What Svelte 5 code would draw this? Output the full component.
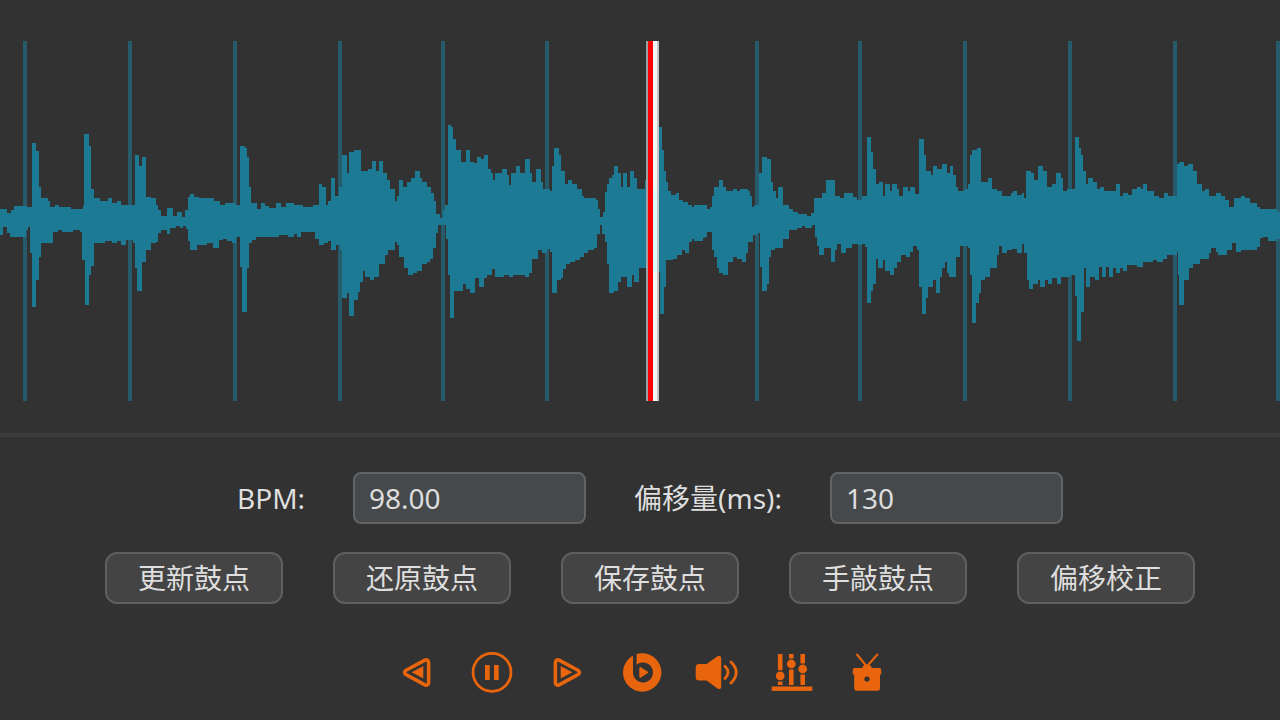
<script>
  let bpm = '98.00';
  let offset = '130';

  const beats = [25, 130, 235, 340, 443, 547, 757, 860, 965, 1070, 1175, 1278];
  const actions = ['更新鼓点', '还原鼓点', '保存鼓点', '手敲鼓点', '偏移校正'];

  // envelope steps as "x,y", the centre line is around y = 182
  const upper = `0,169 7,173 11,170 14,166 27,167 32,103 36,111 39,147 41,158 48,161 50,167 55,165 59,167 71,169
    83,166 84,94 89,106 91,149 94,158 100,161 108,158 112,163 117,161 121,165 135,115 139,126 142,117 146,157
    151,158 156,165 158,170 161,176 167,168 173,176 177,172 182,177 185,170 188,157 190,154 194,157 199,158
    214,161 220,165 225,163 235,165 240,106 245,108 247,117 249,147 251,163 257,169 261,163 265,166 269,168
    276,163 281,167 286,163 294,165 303,167 313,165 319,144 322,147 326,165 328,161 331,138 335,156 339,147
    342,115 347,133 349,112 354,110 361,131 368,129 372,121 376,131 379,121 383,133 387,140 390,149 395,161
    397,156 399,140 403,147 407,142 411,138 415,131 420,138 422,142 427,147 431,153 434,161 436,174 440,178
    443,170 445,165 448,85 451,87 453,99 456,110 461,122 466,110 470,122 474,123 477,117 481,119 484,115
    488,129 491,133 493,140 495,133 502,129 507,135 509,145 511,133 516,126 520,133 525,119 530,133 532,142
    536,129 541,142 543,149 550,151 552,126 554,108 559,115 561,131 565,144 568,140 572,144 577,149 582,156
    584,158 596,160 598,169 600,177 603,172 605,152 607,144 609,138 612,135 614,126 618,133 621,147 623,133
    627,147 630,131 634,138 637,149 645,140 658,87 662,110 664,131 666,142 668,151 671,155 676,153 679,160
    683,162 688,165 692,167 694,165 707,169 710,167 712,156 714,147 719,140 723,147 726,151 733,149 737,151
    740,149 748,151 750,156 752,167 754,165 759,133 762,117 767,119 771,142 773,151 776,158 778,147 783,165
    789,169 793,172 798,174 807,176 811,173 814,158 822,153 826,140 835,156 840,158 844,153 853,157 857,160
    862,156 867,97 871,112 873,129 876,144 879,142 883,156 885,144 890,151 892,144 897,149 899,156 903,147
    908,151 910,147 915,154 919,99 924,115 926,131 931,135 933,126 937,129 942,124 947,133 950,126 953,135
    956,147 958,151 965,149 968,144 970,115 972,110 977,108 981,142 988,138 992,149 997,151 1002,156 1011,153
    1013,151 1017,155 1022,153 1024,158 1026,131 1031,133 1034,140 1038,126 1043,131 1047,147 1052,144
    1056,133 1061,138 1063,151 1067,149 1075,97 1079,108 1081,115 1083,131 1086,144 1088,138 1093,142
    1097,149 1100,147 1104,151 1116,144 1120,156 1123,153 1128,155 1132,149 1137,147 1141,149 1143,144
    1147,151 1154,156 1159,158 1164,153 1168,156 1177,124 1179,122 1184,126 1188,124 1193,131 1197,144
    1202,151 1205,149 1209,156 1216,153 1221,156 1225,160 1229,167 1234,158 1241,156 1245,158 1250,163
    1257,167 1260,169 1277,172`;

  const lower = `0,195 3,187 7,193 10,197 26,190 28,187 30,213 32,267 36,240 39,217 41,203 53,192 58,190 62,192
    73,190 80,192 82,220 85,265 89,235 91,226 94,203 105,201 112,203 117,201 121,205 126,200 133,203 135,228
    137,251 142,222 146,210 151,203 156,202 158,193 161,190 167,194 170,188 176,186 180,188 183,186 186,189
    188,201 190,210 197,205 207,203 213,208 219,200 223,199 227,201 232,203 236,197 240,227 242,272 247,228
    249,203 252,200 256,197 279,195 288,197 294,194 297,197 301,192 315,199 319,205 324,203 328,201 331,210
    336,205 340,210 342,258 347,253 349,276 354,260 358,252 360,242 363,231 365,237 370,240 374,237 379,224
    385,215 388,210 395,202 397,205 399,217 404,228 408,235 413,233 417,231 422,224 427,222 430,219 433,208
    436,193 438,185 446,199 448,235 450,278 454,251 463,244 466,249 470,253 475,238 479,247 484,238 487,235
    492,229 495,237 504,235 509,237 513,235 525,237 529,233 532,219 538,210 542,213 547,209 550,212 552,253
    557,240 561,238 563,229 566,224 570,222 575,220 580,217 584,213 588,210 594,208 597,194 600,185 602,194
    605,202 607,224 609,253 614,251 618,242 621,237 627,247 632,235 634,242 639,228 646,232 660,274 664,247
    666,220 673,219 677,215 682,210 685,213 689,202 692,199 694,201 703,198 705,197 707,192 712,210 714,217
    717,228 719,233 723,235 728,222 733,217 737,219 742,222 746,213 748,202 753,195 757,193 760,227 762,251
    767,244 769,217 771,210 775,208 783,199 789,190 797,188 802,186 805,188 812,185 815,197 817,206 819,215
    824,208 831,222 835,210 837,204 841,213 846,208 852,204 858,205 862,204 865,207 867,263 871,251 873,244
    876,219 878,228 883,220 885,231 890,235 894,228 897,222 901,215 906,217 910,212 913,206 917,210 919,247
    922,274 926,258 928,247 933,240 936,253 940,237 942,228 945,222 947,233 949,237 956,217 960,206 968,208
    970,235 972,283 976,263 979,253 981,240 985,237 990,228 997,215 999,206 1002,213 1007,210 1012,209
    1017,213 1022,204 1024,213 1027,240 1029,249 1033,244 1038,240 1040,247 1045,240 1048,244 1052,238
    1057,244 1061,237 1070,235 1075,256 1077,301 1081,272 1084,228 1086,247 1090,237 1095,240 1099,227
    1102,237 1106,227 1109,237 1113,228 1116,233 1120,228 1123,231 1127,225 1137,227 1143,222 1153,220
    1157,222 1163,219 1167,215 1177,212 1178,235 1179,265 1184,240 1189,228 1193,224 1200,219 1209,213
    1211,208 1216,212 1218,215 1227,210 1232,203 1236,212 1241,210 1257,207 1260,198 1263,197 1268,201 1277,199`;

  const half = (steps) => {
    const points = steps.trim().split(/\s+/).map((pair) => pair.split(','));
    return 'M0 182' + points.map(([x, y]) => `H${x}V${y}`).join('') + 'H1280V182Z';
  };

  const wave = half(upper) + half(lower);
</script>

<main>
  <section class="wave">
    <svg viewBox="0 0 1280 361" preserveAspectRatio="none" aria-hidden="true">
      {#each beats as x}
        <rect class="beat" x={x - 2} y="1" width="4" height="360" />
      {/each}
      <path class="signal" d={wave} />
      <rect x="646" y="1" width="3" height="360" fill="#99a3a5" />
      <rect x="652" y="1" width="5" height="360" fill="#f2f8f8" />
      <rect x="657" y="1" width="2" height="360" fill="#c6c6c6" />
      <rect x="653" y="150" width="4" height="82" fill="#dcfbff" />
      <rect x="648" y="1" width="5" height="360" fill="#ff0000" />
    </svg>
  </section>

  <section class="controls">
    <div class="fields">
      <label for="bpm">BPM:</label>
      <input id="bpm" type="text" bind:value={bpm} />
      <label for="offset">偏移量(ms):</label>
      <input id="offset" type="text" bind:value={offset} />
    </div>

    <div class="actions">
      {#each actions as action}
        <button type="button" class="action">{action}</button>
      {/each}
    </div>
  </section>

  <nav class="player">
    <button type="button" class="icon" aria-label="后退">
      <svg viewBox="0 0 44 44">
        <path class="line" stroke-width="3.6" d="M11.5 20 L29.5 10.3 Q33.6 8.8 33.6 13 V32 Q33.6 36.2 29.5 34.7 L11.5 24.8 Q7.6 22.4 11.5 20Z" />
        <path d="M16.5 22.3 L28.3 16 V28.6Z" />
      </svg>
    </button>
    <button type="button" class="icon" aria-label="暂停">
      <svg viewBox="0 0 44 44">
        <circle class="line" stroke-width="2.7" cx="22" cy="22.3" r="19" />
        <rect x="15" y="15" width="4.7" height="15" />
        <rect x="24" y="15" width="4.7" height="15" />
      </svg>
    </button>
    <button type="button" class="icon" aria-label="前进">
      <svg viewBox="0 0 44 44">
        <path class="line" stroke-width="3.6" d="M32.5 20 L14.5 10.3 Q10.4 8.8 10.4 13 V32 Q10.4 36.2 14.5 34.7 L32.5 24.8 Q36.4 22.4 32.5 20Z" />
        <path d="M27.5 22.3 L15.7 16 V28.6Z" />
      </svg>
    </button>
    <button type="button" class="icon" aria-label="节拍">
      <svg viewBox="0 0 44 44">
        <circle cx="22.2" cy="22.5" r="19.2" />
        <path class="cut" d="M13 2 H16.6 V14.8 A10 10 0 1 1 13 22.5Z" />
        <path class="join" d="M20.3 18.2 L27 22.3 L20.3 26.6Z" />
      </svg>
    </button>
    <button type="button" class="icon" aria-label="音量">
      <svg viewBox="0 0 44 44">
        <path d="M4 14 H11.5 L22.5 6.2 Q26.2 4.6 26.2 8.4 V36.4 Q26.2 40.2 22.5 38.4 L11.5 30.6 H4 Q0.7 30.6 0.7 27 V17.6 Q0.7 14 4 14Z" />
        <path class="line" stroke-width="2.8" d="M30 16.3 Q36 22.3 30 28.4 M36 12 Q46.4 22.3 36 33" />
      </svg>
    </button>
    <button type="button" class="icon" aria-label="均衡器">
      <svg viewBox="0 0 44 44">
        <path d="M7.9 4 h4.6 v16.3 h-4.6Z M7.9 31.5 h4.6 v3.6 h-4.6Z M19 4 h4.6 v4.5 h-4.6Z M19 19.5 h4.6 v15.6 h-4.6Z M30.4 4 h4.6 v9.6 h-4.6Z M30.4 24.6 h4.6 v10.5 h-4.6Z" />
        <circle cx="10.2" cy="25.8" r="4.4" />
        <circle cx="21.3" cy="14" r="4.4" />
        <circle cx="32.7" cy="19" r="4.4" />
        <rect x="1.7" y="36.5" width="40.6" height="4.4" />
      </svg>
    </button>
    <button type="button" class="icon" aria-label="电视">
      <svg viewBox="0 0 44 44">
        <path class="line" stroke-width="2" d="M12 4.5 L21.8 16.5 L32.4 4.5" />
        <path d="M17 18.5 Q18 14.6 22 14.6 T27 18.5Z" />
        <path d="M9.6 18 H34.4 Q36.2 18 36.2 20 V24.5 H35 V38 Q35 40.8 32.4 40.8 H11.8 Q9.2 40.8 9.2 38 V24.5 H7.8 V20 Q7.8 18 9.6 18Z" />
        <circle class="hole" cx="22" cy="29" r="2.6" />
      </svg>
    </button>
  </nav>
</main>

<style>
  :global(body) {
    margin: 0;
    background: #323232;
    color: #dedede;
    font-family: 'Noto Sans', 'Noto Sans CJK SC', sans-serif;
  }

  main {
    overflow: hidden;
  }

  .wave {
    padding: 40px 0 32px;
    border-bottom: 4px solid #3c3c3c;
  }

  .wave svg {
    display: block;
    width: 100%;
    height: 361px;
  }

  .beat {
    fill: #265b6b;
  }

  .signal {
    fill: #1d7a95;
  }

  .controls {
    display: grid;
    gap: 28px;
    padding: 35px 0 0 20px;
  }

  .fields {
    display: flex;
    align-items: center;
    justify-content: center;
    gap: 48px;
  }

  .actions {
    display: flex;
    justify-content: center;
    gap: 50px;
  }

  label {
    font-size: 28px;
    line-height: 40px;
    white-space: nowrap;
  }

  input {
    box-sizing: border-box;
    width: 233px;
    height: 52px;
    padding: 0 14px;
    border: 2px solid #616365;
    border-radius: 8px;
    background: #45494b;
    color: #dedede;
    font: inherit;
    font-size: 28px;
  }

  .action {
    box-sizing: border-box;
    width: 178px;
    height: 52px;
    padding: 0;
    border: 2px solid #5e6060;
    border-radius: 12px;
    background: #444444;
    color: #dedede;
    font: inherit;
    font-size: 28px;
    line-height: 40px;
    white-space: nowrap;
    cursor: pointer;
  }

  .action:hover {
    background: #4d4d4d;
  }

  .player {
    display: flex;
    justify-content: center;
    gap: 31px;
    padding: 46px 0 20px 3px;
  }

  .icon {
    width: 44px;
    height: 44px;
    padding: 0;
    border: none;
    background: none;
    cursor: pointer;
  }

  .icon svg {
    display: block;
    width: 44px;
    height: 44px;
    fill: #e8650d;
  }

  .icon .line {
    fill: none;
    stroke: #e8650d;
    stroke-linecap: round;
    stroke-linejoin: round;
  }

  .icon .cut,
  .icon .hole {
    fill: #323232;
  }

  .icon .join {
    stroke: #e8650d;
    stroke-width: 2;
    stroke-linejoin: round;
  }
</style>
